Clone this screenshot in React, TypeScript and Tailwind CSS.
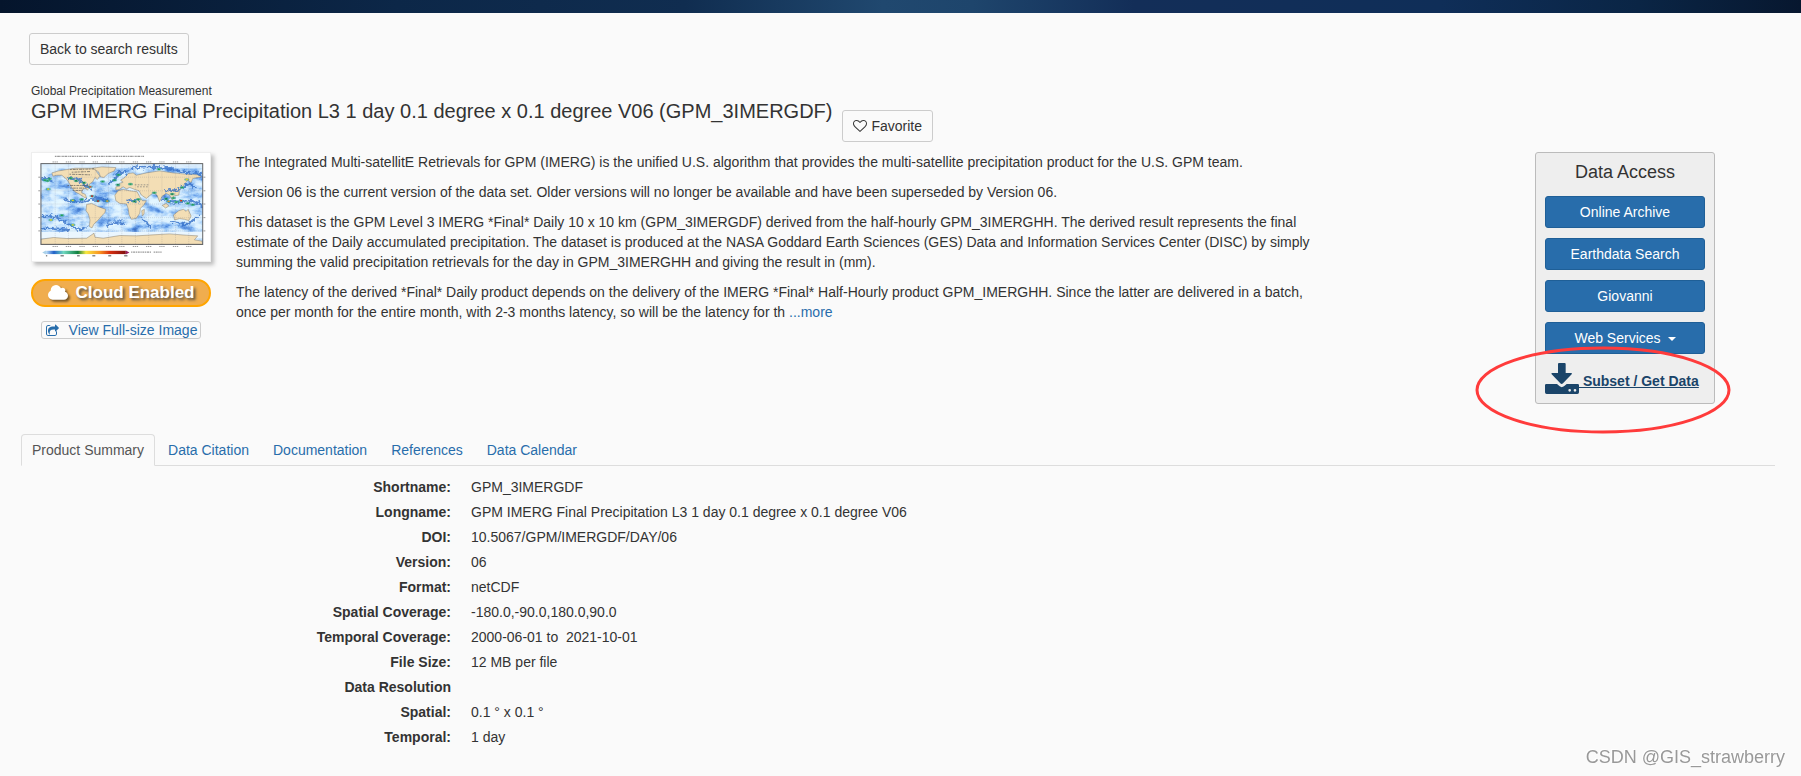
import { useState } from "react";

const rows: [string, string][] = [
  ["Shortname:", "GPM_3IMERGDF"],
  ["Longname:", "GPM IMERG Final Precipitation L3 1 day 0.1 degree x 0.1 degree V06"],
  ["DOI:", "10.5067/GPM/IMERGDF/DAY/06"],
  ["Version:", "06"],
  ["Format:", "netCDF"],
  ["Spatial Coverage:", "-180.0,-90.0,180.0,90.0"],
  ["Temporal Coverage:", "2000-06-01 to \u00a02021-10-01"],
  ["File Size:", "12 MB per file"],
  ["Data Resolution", ""],
  ["Spatial:", "0.1 ° x 0.1 °"],
  ["Temporal:", "1 day"],
];

const tabs = ["Product Summary", "Data Citation", "Documentation", "References", "Data Calendar"];

function HeartIcon() {
  return (
    <svg viewBox="0 0 1792 1792" className="size-[14px]" fill="currentColor" aria-hidden="true">
      <path d="M1664 596q0-81-21.500-143t-55-98.500-81.500-59.500-94-31-98-8-112 25.500-110.500 64-86.500 72-60 61.500q-18 22-49 22t-49-22q-24-28-60-61.500t-86.500-72-110.500-64-112-25.500-98 8-94 31-81.500 59.500-55 98.500-21.500 143q0 168 187 355l581 560 580-559q188-188 188-356zM1792 596q0 221-229 450l-623 600q-18 18-44 18t-44-18l-624-602q-10-8-27.500-26t-55.500-65.500-68-97.500-53.500-121-23.500-138q0-220 127-344t351-124q62 0 126.500 21.500t120 58 95.500 68.500 76 68q36-36 76-68t95.500-68.500 120-58 126.500-21.500q224 0 351 124t127 344z" />
    </svg>
  );
}

function CloudIcon() {
  return (
    <svg viewBox="64 256 1920 1280" className="h-[14px] w-[20px] overflow-visible drop-shadow-[2px_2px_1px_#00000080]" fill="currentColor" aria-hidden="true">
      <path d="M1984 1152q0 159-112.500 271.500t-271.500 112.500h-1088q-185 0-316.500-131.500t-131.500-316.500q0-132 71-241.500t187-163.500q-2-28-2-43 0-212 150-362t362-150q158 0 286.500 88t187.500 230q70-62 166-62 106 0 181 75t75 181q0 75-41 138 129 30 213 134.500t84 239.500z" />
    </svg>
  );
}

function ShareIcon() {
  return (
    <svg viewBox="0 0 1664 1664" className="size-[13px]" fill="currentColor" aria-hidden="true">
      <path d="M1408 928v320q0 119-84.500 203.500t-203.500 84.500h-832q-119 0-203.500-84.500t-84.500-203.500v-832q0-119 84.500-203.500t203.500-84.500h255q13 0 22.500 9.500t9.500 22.500q0 27-26 32-77 26-133 60-10 4-16 4h-112q-66 0-113 47t-47 113v832q0 66 47 113t113 47h832q66 0 113-47t47-113v-267q0-18 18-29 28-13 54-37 16-16 35-8 21 9 21 29zM1645 557l-384 384q-18 19-45 19-12 0-25-5-39-17-39-59v-192h-160q-323 0-438 131-119 137-74 473 3 23-20 34-8 2-12 2-16 0-26-13-10-14-21-31t-39.500-68.500-49.500-99.500-38.500-114-17.500-122q0-49 3.500-91t14-90 28-88 47-81.500 68.500-74 94.500-61.500 124.500-48.500 159.500-30.500 196.500-11h160v-192q0-42 39-59 13-5 25-5 26 0 45 19l384 384q19 19 19 45t-19 45z" />
    </svg>
  );
}

function DownloadIcon() {
  return (
    <svg viewBox="0 0 102 93" className="h-[31px] w-[34px] shrink-0" fill="currentColor" aria-hidden="true">
      <path d="M42 0H59Q62 0 62 3V30H78Q83 30 80 34L54 61Q50 65 46 61L20 34Q17 30 22 30H39V3Q39 0 42 0Z" />
      <path
        fillRule="evenodd"
        d="M4 63H36L44 70Q50 75 57 70L65 63H98Q102 63 102 67V88Q102 93 97 93H5Q0 93 0 88V67Q0 63 4 63ZM74 78A4 4 0 1 0 74 86A4 4 0 1 0 74 78ZM90 78A4 4 0 1 0 90 86A4 4 0 1 0 90 78Z"
      />
    </svg>
  );
}

const land = [
  "95,98 115,92 140,88 165,84 200,84 225,84 230,95 240,108 232,118 225,112 218,125 208,132 205,145 203,150 195,145 185,150 185,158 196,163 200,175 190,170 178,162 165,155 155,142 148,130 140,118 125,105 110,105 98,108",
  "218,84 245,80 288,82 283,92 265,100 252,112 242,110 236,95",
  "200,193 215,190 235,200 257,208 255,218 245,228 235,240 222,252 216,264 208,260 210,240 205,222 198,212",
  "285,165 295,152 310,148 330,152 352,155 360,170 368,182 380,182 372,195 362,205 360,220 350,235 335,238 328,225 325,205 320,192 300,190 288,182",
  "366,212 374,208 373,222 368,228",
  "288,140 300,138 298,130 310,126 302,120 315,112 325,100 340,98 350,105 380,98 420,92 460,98 500,102 540,104 545,110 520,115 515,127 505,120 498,128 490,140 480,150 478,165 462,168 458,180 450,165 440,160 428,168 420,185 412,165 400,158 392,165 380,175 365,165 358,152 345,148 330,142 320,146 310,140 298,148 288,150",
  "462,225 478,212 492,208 500,214 506,208 515,228 508,242 495,238 480,236 465,240",
  "428,196 440,190 448,198 438,204",
  "62,298 100,293 140,296 200,295 222,280 225,292 250,295 300,287 350,288 400,285 450,282 500,286 535,288 525,300 548,304 550,313 62,313",
];

const rainBands = [
  "M62,120 Q80,105 95,125",
  "M140,118 Q165,110 180,122 T215,150",
  "M265,132 Q285,120 290,105 T320,98",
  "M62,228 Q110,225 140,250 T200,262",
  "M130,178 Q170,190 200,180 T270,184",
  "M320,185 Q340,178 360,184",
  "M425,178 Q460,188 500,184 T548,200",
  "M365,232 Q380,245 395,262",
  "M455,244 Q500,258 510,248 T540,230",
  "M440,150 Q475,155 490,138 T530,145",
  "M330,84 Q420,74 470,90 T548,98",
  "M260,258 Q290,240 320,252",
  "M62,268 Q110,262 150,272",
];

const storms: [number, number, string][] = [
  [82, 122, "#22a050"], [88, 116, "#22a050"], [84, 147, "#e8d020"], [74, 120, "#22a050"], [152, 114, "#22a050"],
  [168, 122, "#128040"], [192, 128, "#128040"], [211, 140, "#e84020"], [216, 168, "#c01818"], [234, 183, "#c01818"],
  [248, 124, "#22a050"], [284, 120, "#22a050"], [294, 134, "#128040"], [296, 104, "#22a050"], [158, 181, "#e8d020"],
  [185, 178, "#22a050"], [262, 183, "#e89020"], [92, 240, "#e8d020"], [158, 255, "#e8d020"], [125, 226, "#22a050"],
  [447, 184, "#e89020"], [485, 182, "#e02810"], [470, 186, "#22a050"], [462, 174, "#22a050"], [505, 190, "#22a050"],
  [458, 162, "#128040"], [488, 142, "#22a050"], [502, 118, "#e8d020"], [418, 87, "#22a050"], [404, 158, "#22a050"],
  [332, 132, "#22a050"], [344, 184, "#128040"], [356, 178, "#22a050"], [440, 176, "#128040"], [520, 194, "#22a050"],
];

const meridians = [105, 145, 186, 226, 266, 306, 347, 387, 427, 468, 508];
const parallels = [111, 152, 192, 233, 273];

function PrecipitationMap() {
  return (
    <svg viewBox="35 38 537 327" className="block w-full" role="img" aria-label="Map of daily precipitation">
      <defs>
        <filter id="rain" x="0" y="0" width="1" height="1" colorInterpolationFilters="sRGB">
          <feTurbulence type="fractalNoise" baseFrequency="0.022 0.04" numOctaves="5" seed="8" />
          <feColorMatrix values="1 0 0 0 0  1 0 0 0 0  1 0 0 0 0  0 0 0 0 1" />
          <feComponentTransfer>
            <feFuncR type="table" tableValues=".9 .9 .9 .88 .84 .74 .62 .45 .3 .2 .2" />
            <feFuncG type="table" tableValues=".97 .97 .97 .96 .93 .87 .79 .66 .52 .4 .4" />
            <feFuncB type="table" tableValues="1 1 1 1 1 .99 .97 .93 .84 .75 .75" />
          </feComponentTransfer>
        </filter>
        <filter id="ragged" x="-0.1" y="-0.3" width="1.2" height="1.6">
          <feTurbulence type="fractalNoise" baseFrequency="0.09" numOctaves="3" seed="3" />
          <feDisplacementMap in="SourceGraphic" scale="22" xChannelSelector="R" yChannelSelector="G" />
        </filter>
        <clipPath id="plot">
          <rect x="61" y="70" width="490" height="244" />
        </clipPath>
      </defs>
      <rect x="35" y="38" width="537" height="327" fill="#fff" />
      <path d="M104 48H204M214 48H374" stroke="#999" strokeWidth="4" strokeDasharray="5 2 8 2 3 2" />
      <g clipPath="url(#plot)">
        <rect x="61" y="70" width="490" height="244" filter="url(#rain)" />
        <rect x="61" y="70" width="490" height="14" fill="#e4f3fe" opacity="0.8" />
        <rect x="61" y="276" width="490" height="20" fill="#eaf6fe" />
        <g fill="#f3deb5" stroke="#857d70" strokeWidth="1.5">
          {land.map((p) => <polygon key={p} points={p} />)}
        </g>
        <g fill="none" stroke="#3470c8" strokeWidth="7" opacity="0.8" filter="url(#ragged)">
          {rainBands.map((d) => <path key={d} d={d} />)}
        </g>
        <path d="M150 88L222 86M155 96L210 94M148 102L214 104M142 136H206M150 144H200M158 151H188" stroke="#555" strokeWidth="2" strokeDasharray="5 3 9 2" />
        <path d="M345 134H390M352 140H386" stroke="#777" strokeWidth="2" strokeDasharray="5 4" />
        {storms.map(([x, y, c]) => (
          <g key={`${x}-${y}`}>
            <ellipse cx={x} cy={y} rx="8" ry="4" fill="#30a090" opacity="0.65" />
            <rect x={x - 3} y={y - 2} width="6" height="4" fill={c} />
          </g>
        ))}
        <g stroke="#667" strokeWidth="1" strokeDasharray="3 3" opacity="0.6">
          {meridians.map((x) => <path key={x} d={`M${x} 70V314`} />)}
          {parallels.map((y) => <path key={y} d={`M61 ${y}H551`} />)}
        </g>
      </g>
      <rect x="62" y="70" width="488" height="244" fill="none" stroke="#666" strokeWidth="3" />
      <g stroke="#999" strokeWidth="3">
        {meridians.map((x) => <path key={x} d={`M${x - 8} 65H${x + 8}M${x - 8} 320H${x + 8}`} strokeDasharray="4 2" />)}
        {parallels.map((y) => <path key={y} d={`M54 ${y}H60M552 ${y}H558`} />)}
      </g>
      <linearGradient id="scale">
        <stop offset="0" stopColor="#c0e0f8" />
        <stop offset="0.1" stopColor="#2060c8" />
        <stop offset="0.22" stopColor="#70d8c0" />
        <stop offset="0.4" stopColor="#108040" />
        <stop offset="0.5" stopColor="#f8e840" />
        <stop offset="0.68" stopColor="#f89020" />
        <stop offset="0.8" stopColor="#d83010" />
        <stop offset="1" stopColor="#801010" />
      </linearGradient>
      <rect x="77" y="333" width="241" height="10" fill="url(#scale)" />
      <path d="M77 332L66 338L77 344Z" fill="#a8d0e8" />
      <path d="M318 332L329 338L318 344Z" fill="#982060" />
      <path d="M77 348H81M121 348H131M171 348H179M217 348H226M265 348H274M313 348H323" stroke="#888" strokeWidth="4" />
      <path d="M334 337H394M402 337H426" stroke="#999" strokeWidth="4" strokeDasharray="4 2 6 2" />
    </svg>
  );
}

const accessButton =
  "block h-8 w-full rounded-[3px] border border-[#1f5f97] bg-[#286dab] text-center text-sm leading-[30px] text-white";

export default function App() {
  const [active, setActive] = useState(0);
  return (
    <div className="min-h-screen bg-[#fafafa] font-['Liberation_Sans',Arial,sans-serif] text-sm text-[#333]">
      <header className="h-[13px] bg-[linear-gradient(90deg,#05152c_0%,#0c2748_22%,#102d50_38%,#20486f_49%,#1e456c_54%,#132e58_63%,#0f2e58_80%,#0a2545_91%,#07172f_100%)]" />
      <main className="pt-5 pr-[26px] pl-[21px]">
        <div className="pl-2">
          <button type="button" className="block h-8 rounded-[3px] border border-[#ccc] px-[10px]">Back to search results</button>
        </div>
        <div className="pt-[18px] pl-[10px]">
          <div className="text-xs leading-4">Global Precipitation Measurement</div>
          <div className="flex items-start gap-[10px]">
            <h1 className="text-xl leading-6">GPM IMERG Final Precipitation L3 1 day 0.1 degree x 0.1 degree V06 (GPM_3IMERGDF)</h1>
            <button type="button" className="mt-[11px] flex h-8 shrink-0 items-center gap-1 rounded-[3px] border border-[#ccc] px-[10px]">
              <HeartIcon />
              Favorite
            </button>
          </div>
        </div>

        <section className="flex items-start pt-[10px] pr-[60px] pl-[10px]">
          <div className="flex w-[180px] shrink-0 flex-col items-center">
            <div className="w-full border border-[#eee] bg-white shadow-[3px_3px_4px_#bbb]">
              <PrecipitationMap />
            </div>
            <div className="mt-[17px] flex h-7 w-full items-center justify-center gap-2 rounded-full border-2 border-[#ffa500] bg-[#f0ad4e] text-[17px] font-bold whitespace-nowrap text-white [text-shadow:2px_2px_3px_#444]">
              <CloudIcon />
              Cloud Enabled
            </div>
            <a href="#image" className="mt-[14px] flex h-[18px] items-center gap-[10px] rounded-[3px] border border-[#ccc] pr-[3px] pl-1 whitespace-nowrap text-[#286dab]">
              <ShareIcon />
              <span className="text-sm leading-4">View Full-size Image</span>
            </a>
          </div>
          <div className="ml-[25px] max-w-[1085px] flex-1 space-y-[10px] leading-5">
            <p>The Integrated Multi-satellitE Retrievals for GPM (IMERG) is the unified U.S. algorithm that provides the multi-satellite precipitation product for the U.S. GPM team.</p>
            <p>Version 06 is the current version of the data set. Older versions will no longer be available and have been superseded by Version 06.</p>
            <p>This dataset is the GPM Level 3 IMERG *Final* Daily 10 x 10 km (GPM_3IMERGDF) derived from the half-hourly GPM_3IMERGHH. The derived result represents the final estimate of the Daily accumulated precipitation. The dataset is produced at the NASA Goddard Earth Sciences (GES) Data and Information Services Center (DISC) by simply summing the valid precipitation retrievals for the day in GPM_3IMERGHH and giving the result in (mm).</p>
            <p>The latency of the derived *Final* Daily product depends on the delivery of the IMERG *Final* Half-Hourly product GPM_IMERGHH. Since the latter are delivered in a batch, once per month for the entire month, with 2-3 months latency, so will be the latency for th <a href="#more" className="text-[#286dab]">...more</a></p>
          </div>
          <aside className="relative ml-auto w-[180px] shrink-0 rounded-[3px] border border-[#bbb] bg-[#eee] px-[9px] pb-[9px]">
            <h2 className="pt-[7px] pb-3 text-center text-lg leading-6">Data Access</h2>
            <div className="space-y-[10px]">
              <a href="#archive" className={accessButton}>Online Archive</a>
              <a href="#search" className={accessButton}>Earthdata Search</a>
              <a href="#giovanni" className={accessButton}>Giovanni</a>
              <button type="button" className={accessButton}>
                Web Services
                <span className="ml-[7px] inline-block border-x-4 border-t-4 border-x-transparent align-middle" />
              </button>
            </div>
            <a href="#subset" className="mt-[9px] flex items-end font-bold whitespace-nowrap text-[#1a4469]">
              <DownloadIcon />
              <span className="pb-[3px] leading-5 whitespace-pre underline"> Subset / Get Data</span>
            </a>
            <svg viewBox="0 0 256 88" className="pointer-events-none absolute top-[193px] -left-[61px] h-[88px] w-[256px]" fill="none" aria-hidden="true">
              <ellipse cx="128" cy="44" rx="126" ry="42" stroke="#ff3b3b" strokeWidth="3" />
            </svg>
          </aside>
        </section>

        <nav className="mt-[30px] flex gap-[2px] border-b border-[#ddd]" role="tablist">
          {tabs.map((tab, i) => (
            <button
              key={tab}
              type="button"
              role="tab"
              aria-selected={i === active}
              onClick={() => setActive(i)}
              className={
                i === active
                  ? "-mb-px h-8 rounded-t border border-[#ddd] border-b-transparent bg-[#fafafa] px-[10px] text-[#555]"
                  : "-mb-px h-8 border border-transparent px-[10px] text-[#286dab]"
              }
            >
              {tab}
            </button>
          ))}
        </nav>

        <dl className="grid grid-cols-[430px_1fr] gap-x-5 pt-[9px] leading-[25px]">
          {rows.map(([label, value]) => (
            <div key={label} className="contents">
              <dt className="text-right font-bold">{label}</dt>
              <dd>{value}</dd>
            </div>
          ))}
        </dl>
      </main>
      <div className="fixed right-4 bottom-[7px] text-lg leading-6 text-[#999] [text-shadow:-1px_-1px_0_#fff]">CSDN @GIS_strawberry</div>
    </div>
  );
}
